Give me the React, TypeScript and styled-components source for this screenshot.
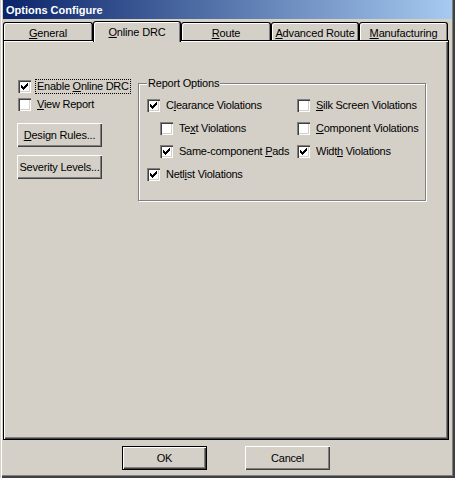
import React from "react";
import styled, { createGlobalStyle } from "styled-components";

const Global = createGlobalStyle`
  html, body { margin: 0; padding: 0; background: #D4D0C8; }
  body { font-family: "Liberation Sans", Arial, sans-serif; font-size: 11px; color: #000; }
  * { box-sizing: border-box; }
`;

const Window = styled.div`
  width: 455px;
  height: 478px;
  background: #D4D0C8;
  padding: 0 3px 2px 3px;
  display: flex;
  flex-direction: column;
  box-shadow: inset 1px 0 0 #D4D0C8, inset 2px 0 0 #ffffff,
    inset -2px -2px 0 #404040, inset -3px -3px 0 #808080;
`;

const TitleBar = styled.div`
  height: 19px;
  flex: none;
  background: linear-gradient(to right, #0A246A, #A6CAF0);
  color: #fff;
  font-weight: bold;
  font-size: 11px;
  line-height: 13px;
  padding: 4px 0 0 3px;
  letter-spacing: 0;
`;

const Body = styled.div`
  padding-top: 2px;
  display: flex;
  flex-direction: column;
`;

const TabStrip = styled.div`
  display: flex;
  align-items: flex-end;
  height: 19px;
  position: relative;
  z-index: 2;
`;

const Tab = styled.div<{ $active?: boolean; $w: number }>`
  width: ${(p) => p.$w}px;
  height: ${(p) => (p.$active ? 21 : 18)}px;
  margin-bottom: ${(p) => (p.$active ? -2 : 0)}px;
  border: 1px solid #000;
  border-bottom: none;
  border-radius: 3px 3px 0 0;
  background: #D4D0C8;
  box-shadow: inset 1px 1px 0 #ffffff, inset -1px 0 0 #808080;
  display: flex;
  justify-content: center;
  align-items: flex-start;
  padding-top: ${(p) => (p.$active ? 4 : 4)}px;
  line-height: 13px;
  font-size: 11px;
  letter-spacing: -0.15px;
  white-space: nowrap;
`;

const Panel = styled.div`
  width: 446px;
  height: 400px;
  border: 1px solid #000;
  box-shadow: inset 1px 1px 0 #ffffff, inset -1px -1px 0 #404040,
    inset -2px -2px 0 #808080;
  padding: 38px 0 0 13px;
  display: grid;
  grid-template-columns: 121px 288px;
  align-items: start;
`;

const LeftColumn = styled.div`
  display: flex;
  flex-direction: column;
  align-items: flex-start;
`;

const CheckRow = styled.label<{ $indent?: number; $mt?: number }>`
  display: flex;
  align-items: center;
  gap: 5px;
  height: 15px;
  padding-left: ${(p) => p.$indent ?? 0}px;
  margin-top: ${(p) => p.$mt ?? 0}px;
  line-height: 13px;
  white-space: nowrap;
  letter-spacing: -0.25px;
`;

const Box = styled.span`
  width: 13px;
  height: 13px;
  flex: none;
  background: #fff;
  display: block;
  box-shadow: inset 1px 1px 0 #808080, inset 2px 2px 0 #404040,
    inset -1px -1px 0 #ffffff, inset -2px -2px 0 #D4D0C8;
  svg { display: block; }
`;

const LabelText = styled.span<{ $focus?: boolean }>`
  padding: 0 1px;
  outline: ${(p) => (p.$focus ? "1px dotted #000" : "none")};
  outline-offset: 0;
  line-height: 13px;
`;

const Acc = styled.u`
  text-decoration: underline;
  text-underline-offset: 1px;
`;

const Button = styled.div<{ $default?: boolean; $mt?: number; $w?: number }>`
  width: ${(p) => p.$w ?? 85}px;
  height: 24px;
  margin-top: ${(p) => p.$mt ?? 0}px;
  background: #D4D0C8;
  display: flex;
  align-items: center;
  justify-content: center;
  line-height: 13px;
  letter-spacing: -0.2px;
  white-space: nowrap;
  border: ${(p) => (p.$default ? "1px solid #000" : "none")};
  box-shadow: inset 1px 1px 0 #ffffff, inset -1px -1px 0 #404040,
    inset -2px -2px 0 #808080;
`;

const Group = styled.div`
  position: relative;
  margin-top: 4px;
  width: 288px;
  height: 118px;
  border: 1px solid #808080;
  box-shadow: inset 1px 1px 0 #ffffff, 1px 1px 0 #ffffff;
  padding: 14px 0 0 8px;
  display: flex;
`;

const GroupTitle = styled.span`
  position: absolute;
  top: -7px;
  left: 8px;
  padding: 0 1px;
  background: #D4D0C8;
  line-height: 13px;
  letter-spacing: -0.2px;
  white-space: nowrap;
`;

const GroupColumn = styled.div<{ $w?: number }>`
  width: ${(p) => (p.$w ? `${p.$w}px` : "auto")};
  display: flex;
  flex-direction: column;
  gap: 8px;
`;

const Footer = styled.div`
  flex: 1;
  display: flex;
  justify-content: center;
  align-items: flex-start;
  gap: 38px;
  padding-top: 6px;
  padding-right: 3px;
`;

const CheckMark = () => (
  <svg width="13" height="13" viewBox="0 0 13 13" shapeRendering="crispEdges">
    <path
      d="M3 5h1v3H3z M4 6h1v3H4z M5 7h1v3H5z M6 6h1v3H6z M7 5h1v3H7z M8 4h1v3H8z M9 3h1v3H9z"
      fill="#000"
    />
  </svg>
);

const Check: React.FC<{
  checked?: boolean;
  indent?: number;
  mt?: number;
  focus?: boolean;
  children: React.ReactNode;
}> = ({ checked, indent, mt, focus, children }) => (
  <CheckRow $indent={indent} $mt={mt}>
    <Box>{checked ? <CheckMark /> : null}</Box>
    <LabelText $focus={focus}>{children}</LabelText>
  </CheckRow>
);

const tabs: { w: number; label: React.ReactNode; active?: boolean }[] = [
  { w: 90, label: <><Acc>G</Acc>eneral</> },
  { w: 88, label: <><Acc>O</Acc>nline DRC</>, active: true },
  { w: 90, label: <><Acc>R</Acc>oute</> },
  { w: 88, label: <><Acc>A</Acc>dvanced Route</> },
  { w: 89, label: <><Acc>M</Acc>anufacturing</> },
];

export default function App() {
  return (
    <>
      <Global />
      <Window>
        <TitleBar>Options Configure</TitleBar>
        <Body>
          <TabStrip>
            {tabs.map((t, i) => (
              <Tab key={i} $w={t.w} $active={t.active}>
                {t.label}
              </Tab>
            ))}
          </TabStrip>
          <Panel>
            <LeftColumn>
              <Check checked indent={1} focus>
                Enable <Acc>O</Acc>nline DRC
              </Check>
              <Check indent={1} mt={3}>
                <Acc>V</Acc>iew Report
              </Check>
              <Button $mt={11}>
                <Acc>D</Acc>esign Rules...
              </Button>
              <Button $mt={8}>Severity Levels...</Button>
            </LeftColumn>
            <Group>
              <GroupTitle>Report Options</GroupTitle>
              <GroupColumn $w={150}>
                <Check checked>
                  C<Acc>l</Acc>earance Violations
                </Check>
                <Check indent={13}>
                  Te<Acc>x</Acc>t Violations
                </Check>
                <Check checked indent={13}>
                  Same-component <Acc>P</Acc>ads
                </Check>
                <Check checked>
                  Netl<Acc>i</Acc>st Violations
                </Check>
              </GroupColumn>
              <GroupColumn>
                <Check>
                  <Acc>S</Acc>ilk Screen Violations
                </Check>
                <Check>
                  <Acc>C</Acc>omponent Violations
                </Check>
                <Check checked>
                  Widt<Acc>h</Acc> Violations
                </Check>
              </GroupColumn>
            </Group>
          </Panel>
        </Body>
        <Footer>
          <Button $default>OK</Button>
          <Button>Cancel</Button>
        </Footer>
      </Window>
    </>
  );
}
